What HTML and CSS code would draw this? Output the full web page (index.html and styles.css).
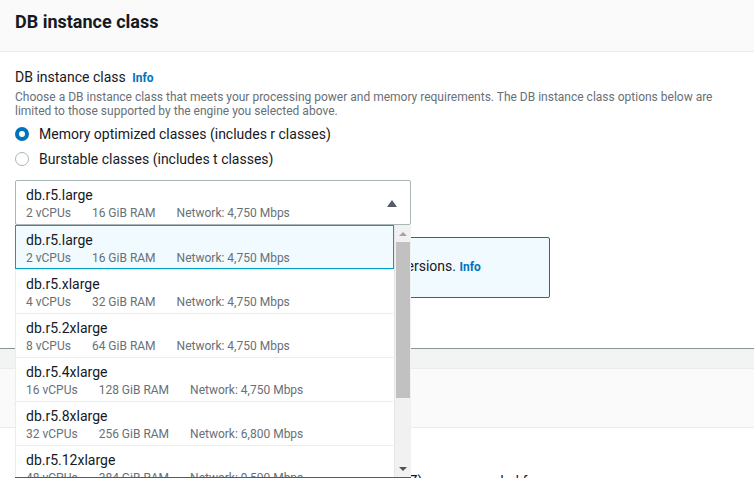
FILE: index.html
```html
<!DOCTYPE html>
<html>
<head>
<meta charset="utf-8">
<link rel="stylesheet" href="styles.css">
</head>
<body>
<section class="panel">
  <div class="panel-header"><h2>DB instance class</h2></div>
  <div class="panel-body">
    <div class="label">DB instance class <a class="info">Info</a></div>
    <div class="desc">Choose a DB instance class that meets your processing power and memory requirements. The DB instance class options below are limited to those supported by the engine you selected above.</div>
    <div class="radios">
      <div class="radio"><span class="dot checked"></span><span>Memory optimized classes (includes r classes)</span></div>
      <div class="radio"><span class="dot"></span><span>Burstable classes (includes t classes)</span></div>
    </div>
    <div class="select-wrap">
      <div class="select">
        <div class="opt">
          <div class="opt-title">db.r5.large</div>
          <div class="opt-sub"><span>2 vCPUs</span><span>16 GiB RAM</span><span>Network: 4,750 Mbps</span></div>
        </div>
        <span class="caret"></span>
      </div>
      <div class="menu">
        <div class="items">
          <div class="item selected">
            <div class="opt-title">db.r5.large</div>
            <div class="opt-sub"><span>2 vCPUs</span><span>16 GiB RAM</span><span>Network: 4,750 Mbps</span></div>
          </div>
          <div class="item">
            <div class="opt-title">db.r5.xlarge</div>
            <div class="opt-sub"><span>4 vCPUs</span><span>32 GiB RAM</span><span>Network: 4,750 Mbps</span></div>
          </div>
          <div class="item">
            <div class="opt-title">db.r5.2xlarge</div>
            <div class="opt-sub"><span>8 vCPUs</span><span>64 GiB RAM</span><span>Network: 4,750 Mbps</span></div>
          </div>
          <div class="item">
            <div class="opt-title">db.r5.4xlarge</div>
            <div class="opt-sub"><span>16 vCPUs</span><span>128 GiB RAM</span><span>Network: 4,750 Mbps</span></div>
          </div>
          <div class="item">
            <div class="opt-title">db.r5.8xlarge</div>
            <div class="opt-sub"><span>32 vCPUs</span><span>256 GiB RAM</span><span>Network: 6,800 Mbps</span></div>
          </div>
          <div class="item">
            <div class="opt-title">db.r5.12xlarge</div>
            <div class="opt-sub"><span>48 vCPUs</span><span>384 GiB RAM</span><span>Network: 9,500 Mbps</span></div>
          </div>
        </div>
        <div class="scrollbar">
          <div class="sb-btn"><span class="arrow-up"></span></div>
          <div class="sb-thumb"></div>
          <div class="sb-space"></div>
          <div class="sb-btn"><span class="arrow-down"></span></div>
        </div>
      </div>
    </div>
    <div class="alert">Some DB instance classes aren't available for all engine versions. <a class="info info-alert">Info</a></div>
  </div>
</section>
<div class="gap"></div>
<section class="panel2">
  <div class="panel2-header"><h2>Availability &amp; durability</h2></div>
  <div class="panel2-body">
    <p class="p2">Creates a standby DB instance in a different Availability Zone (AZ), recommended for<br>production workloads.</p>
  </div>
</section>
</body>
</html>
```
FILE: styles.css
```css
html, body {
  margin: 0;
  padding: 0;
}
body {
  width: 754px;
  height: 478px;
  overflow: hidden;
  font-family: Roboto, "Noto Sans", sans-serif;
  color: #16191f;
  background: #ffffff;
}
h2 {
  margin: 0;
  font-size: 18px;
  line-height: 22px;
  font-weight: 700;
}
.panel {
  border-bottom: 1px solid #879596;
}
.panel-header {
  height: 52px;
  box-sizing: border-box;
  padding: 11px 15px 0;
  background: #fafafa;
  border-bottom: 1px solid #eaeded;
}
.panel-body {
  padding: 15px 15px 50px;
}
.label {
  font-size: 14px;
  line-height: 20px;
}
.info {
  font-size: 12px;
  font-weight: 700;
  color: #0073bb;
  margin-left: 3px;
}
.info-alert {
  margin-left: 0;
}
.desc {
  margin-top: 2px;
  font-size: 12px;
  line-height: 14px;
  color: #687078;
}
.radios {
  margin-top: 6px;
  display: flex;
  flex-direction: column;
  gap: 5px;
}
.radio {
  display: flex;
  align-items: center;
  gap: 10px;
  font-size: 14px;
  line-height: 20px;
}
.dot {
  width: 14px;
  height: 14px;
  box-sizing: border-box;
  border-radius: 50%;
  border: 1.5px solid #aab7b8;
  background: #fff;
}
.dot.checked {
  border: 4px solid #0073bb;
}
.select-wrap {
  position: relative;
  width: 396px;
  margin-top: 11px;
}
.select {
  height: 45px;
  box-sizing: border-box;
  border: 1px solid #aab7b8;
  border-radius: 2px;
  padding: 4px 13px 3px 10px;
  display: flex;
  align-items: center;
}
.opt {
  flex: 1;
  align-self: flex-start;
}
.opt-title {
  font-size: 14px;
  line-height: 20px;
}
.opt-sub {
  font-size: 12px;
  line-height: 16px;
  color: #687078;
  display: flex;
  gap: 21px;
}
.caret {
  width: 0;
  height: 0;
  border-left: 5.5px solid transparent;
  border-right: 5.5px solid transparent;
  border-bottom: 7px solid #545b64;
}
.menu {
  position: absolute;
  top: 45px;
  left: 0;
  width: 396px;
  height: 253px;
  box-sizing: border-box;
  background: #fff;
  border-bottom: 1px solid #545b64;
  display: flex;
}
.items {
  flex: 1;
  overflow: hidden;
}
.item {
  height: 44px;
  box-sizing: border-box;
  border: 1px solid transparent;
  border-left-color: #eaeded;
  border-top-color: #eaeded;
  padding: 4px 10px 0;
}
.item.selected {
  background: #f1faff;
  border-color: #00a1c9;
}
.scrollbar {
  width: 17px;
  background: #f1f1f1;
  border-left: 1px solid #e6e6e6;
  box-sizing: border-box;
  display: flex;
  flex-direction: column;
}
.sb-btn {
  height: 17px;
  display: flex;
  align-items: center;
  justify-content: center;
}
.arrow-up {
  width: 0;
  height: 0;
  border-left: 4px solid transparent;
  border-right: 4px solid transparent;
  border-bottom: 4px solid #a3a3a3;
}
.arrow-down {
  width: 0;
  height: 0;
  border-left: 4px solid transparent;
  border-right: 4px solid transparent;
  border-top: 4px solid #505050;
}
.sb-thumb {
  height: 156px;
  margin: 0 1px;
  background: #c1c1c1;
}
.sb-space {
  flex: 1;
}
.alert {
  margin-top: 12px;
  width: 535px;
  box-sizing: border-box;
  border: 1px solid #0073bb;
  border-radius: 2px;
  background: #f1faff;
  padding: 18px 20px 20px 36px;
  font-size: 14px;
  line-height: 20px;
}
.gap {
  height: 19px;
  background: #f2f3f3;
}
.panel2 {
  border-top: 1px solid #eaeded;
}
.panel2-header {
  height: 59px;
  box-sizing: border-box;
  padding: 18px 15px 0;
  background: #fafafa;
  border-bottom: 1px solid #eaeded;
}
.panel2-body {
  padding: 43px 15px 0;
}
.p2 {
  margin: 0;
  font-size: 14px;
  line-height: 20px;
}
```
